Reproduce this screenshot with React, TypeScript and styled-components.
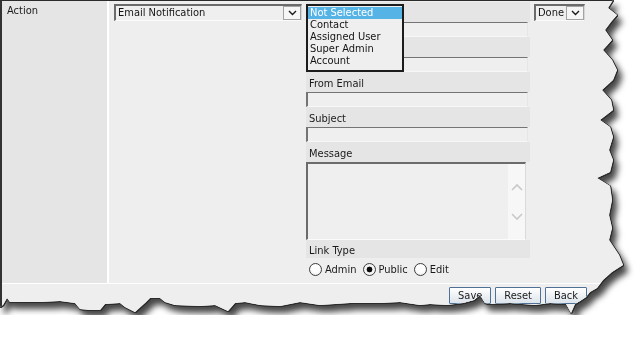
import styled, { createGlobalStyle } from "styled-components";

// ============================================
// Global
// ============================================
const GlobalStyle = createGlobalStyle`
  html, body {
    margin: 0;
    padding: 0;
    background: #ffffff;
  }
  body {
    font-family: "DejaVu Sans Condensed", "DejaVu Sans", sans-serif;
    font-stretch: condensed;
    font-size: 11px;
    color: #1a1a1a;
  }
`;

// torn paper edge around the right and bottom side
const TORN_EDGE = [
  [0, 0], [613, 0], [608, 8], [617, 15], [611, 22], [605, 30], [612, 40],
  [603, 50], [612, 60], [617, 70], [613, 80], [602, 90], [611, 100],
  [613, 110], [600, 120], [610, 127], [613, 137], [609, 150], [613, 160],
  [610, 172], [597, 178], [610, 186], [612, 200], [609, 215], [612, 228],
  [609, 240], [619, 255], [623, 265], [612, 272], [603, 280], [597, 288],
  [590, 292], [586, 297], [580, 301], [575, 304], [571, 313], [566, 304],
  [550, 303], [535, 305], [510, 303], [490, 304], [485, 303], [480, 295],
  [474, 300], [463, 303], [447, 305], [430, 304], [420, 305], [400, 302],
  [380, 303], [350, 303], [320, 305], [300, 302], [280, 306], [260, 305],
  [245, 302], [235, 303], [228, 311], [215, 305], [200, 306], [175, 305],
  [165, 302], [160, 298], [150, 298], [145, 303], [135, 312], [125, 307],
  [120, 303], [105, 304], [100, 310], [90, 310], [80, 309], [75, 303],
  [60, 301], [40, 302], [10, 302], [7, 298], [3, 305], [0, 307],
]
  .map(([x, y]) => `${x}px ${y}px`)
  .join(", ");

// ============================================
// Styled Components
// ============================================
const Shadow = styled.div`
  width: 625px;
  filter: drop-shadow(4px 6px 3px rgba(0, 0, 0, 0.72));
`;

const Outline = styled.div`
  filter: drop-shadow(1px 0 0 #2c2c2c) drop-shadow(0 1px 0 #2c2c2c);
`;

const Sheet = styled.div`
  width: 625px;
  height: 315px;
  clip-path: polygon(${TORN_EDGE});
  background: #eeeeee;
`;

const Panel = styled.div`
  height: 100%;
  box-sizing: border-box;
  display: flex;
  flex-direction: column;
  border-top: 1px solid #2b2b2b;
  border-left: 2px solid #333333;
`;

const Row = styled.div`
  display: flex;
  height: 283px;
  box-sizing: border-box;
  border-bottom: 1px solid #ffffff;
`;

const LabelCell = styled.div`
  width: 105px;
  box-sizing: border-box;
  padding: 3px 5px;
  line-height: 13px;
  background: #e5e5e5;
`;

const ContentCell = styled.div`
  flex: 1;
  display: flex;
  align-items: flex-start;
  gap: 4px;
  padding: 1px 5px 0;
  border-left: 2px solid #ffffff;
  background: #eeeeee;
`;

const SelectBox = styled.div<{ $width: number }>`
  width: ${(p) => p.$width}px;
  height: 17px;
  margin-top: 2px;
  box-sizing: border-box;
  display: flex;
  align-items: center;
  padding-left: 2px;
  border-top: 2px solid #6b6b6b;
  border-left: 2px solid #6b6b6b;
  border-right: 1px solid #d6d6d6;
  border-bottom: 1px solid #fbfbfb;
  background: #efefef;
  color: #141414;
  line-height: 14px;
  white-space: nowrap;
`;

const ArrowBox = styled.span`
  margin-left: auto;
  width: 18px;
  height: 14px;
  box-sizing: border-box;
  display: flex;
  align-items: center;
  justify-content: center;
  border: 1px solid #a3a3a3;
  background: #f6f6f6;
`;

const FormColumn = styled.div`
  position: relative;
  width: 224px;
  display: flex;
  flex-direction: column;
`;

const ListBox = styled.ul`
  position: absolute;
  top: 2px;
  left: 0;
  z-index: 2;
  width: 98px;
  height: 68px;
  box-sizing: border-box;
  margin: 0;
  padding: 1px 0 0;
  list-style: none;
  border: 2px solid #1c1c1c;
  background: #efefef;
`;

const ListOption = styled.li<{ $selected?: boolean }>`
  height: 12px;
  line-height: 12px;
  padding-left: 2px;
  white-space: nowrap;
  background: ${(p) => (p.$selected ? "#56b3e6" : "transparent")};
  color: ${(p) => (p.$selected ? "#ffffff" : "#141414")};
`;

const FieldLabel = styled.div<{ $height?: number; $pad?: number }>`
  height: ${(p) => p.$height ?? 20}px;
  box-sizing: border-box;
  padding: ${(p) => p.$pad ?? 5}px 3px 0;
  line-height: 13px;
  background: #e5e5e5;
  color: #1a1a1a;
`;

const TextInput = styled.input`
  display: block;
  width: 222px;
  height: 15px;
  box-sizing: border-box;
  margin: 0;
  padding: 0 2px;
  border-top: 1px solid #747474;
  border-left: 2px solid #747474;
  border-right: 1px solid #e6e6e6;
  border-bottom: 1px solid #f7f7f7;
  background: #efefef;
  font: inherit;
  outline: none;
`;

const TextAreaBox = styled.div`
  display: flex;
  width: 220px;
  height: 78px;
  box-sizing: border-box;
  border-top: 2px solid #6b6b6b;
  border-left: 2px solid #6b6b6b;
  border-right: 1px solid #dadada;
  border-bottom: 1px solid #fbfbfb;
  background: #efefef;
`;

const TextArea = styled.textarea`
  flex: 1;
  margin: 0;
  padding: 1px 2px;
  border: none;
  resize: none;
  overflow: hidden;
  background: transparent;
  font: inherit;
  outline: none;
`;

const ScrollTrack = styled.div`
  width: 17px;
  display: flex;
  flex-direction: column;
  align-items: center;
  gap: 22px;
  padding-top: 19px;
  background: #f7f7f7;
`;

const RadioRow = styled.div`
  display: flex;
  align-items: center;
  height: 23px;
  padding-left: 3px;
`;

const RadioOption = styled.label`
  display: flex;
  align-items: center;
  gap: 3px;
  margin-right: 6px;
  color: #1a1a1a;
`;

const RadioInput = styled.input`
  appearance: none;
  margin: 0;
  width: 13px;
  height: 13px;
  box-sizing: border-box;
  border-radius: 50%;
  border: 1px solid #3c3c3c;
  background: radial-gradient(circle at 50% 40%, #ffffff 40%, #e4e4e4 100%);

  &:checked {
    background: radial-gradient(circle, #0a0a0a 0 2.6px, #f3f3f3 3.2px);
  }
`;

const Footer = styled.div`
  flex: 1;
  display: flex;
  justify-content: flex-end;
  align-items: flex-start;
  gap: 4px;
  padding: 3px 38px 0 0;
  background: #eeeeee;
`;

const ActionButton = styled.button`
  height: 17px;
  min-width: 42px;
  box-sizing: border-box;
  margin: 0;
  padding: 0 8px;
  border: 1px solid #4f7196;
  border-radius: 1px;
  background: linear-gradient(#ffffff, #dde4ec);
  font: inherit;
  line-height: 14px;
  color: #1b1b1b;
`;

// ============================================
// Icons
// ============================================
function ChevronDown({ color = "#1a1a1a" }: { color?: string }) {
  return (
    <svg width="9" height="6" viewBox="0 0 9 6">
      <polyline
        points="1,1 4.5,4.5 8,1"
        fill="none"
        stroke={color}
        strokeWidth="1.4"
      />
    </svg>
  );
}

function ScrollChevron({ up }: { up?: boolean }) {
  return (
    <svg width="12" height="8" viewBox="0 0 12 8">
      <polyline
        points={up ? "1,7 6,2 11,7" : "1,1 6,6 11,1"}
        fill="none"
        stroke="#c9c9c9"
        strokeWidth="1.6"
      />
    </svg>
  );
}

// ============================================
// Main Component
// ============================================
const recipients = ["Not Selected", "Contact", "Assigned User", "Super Admin", "Account"];

export default function App() {
  return (
    <>
      <GlobalStyle />
      <Shadow>
        <Outline>
          <Sheet>
            <Panel>
              <Row>
                <LabelCell>Action</LabelCell>
                <ContentCell>
                  <SelectBox $width={188}>
                    Email Notification
                    <ArrowBox>
                      <ChevronDown />
                    </ArrowBox>
                  </SelectBox>

                  <FormColumn>
                    {/* open recipient list covers the first two fields */}
                    <ListBox>
                      {recipients.map((r, i) => (
                        <ListOption key={r} $selected={i === 0}>
                          {r}
                        </ListOption>
                      ))}
                    </ListBox>
                    <FieldLabel />
                    <TextInput />
                    <FieldLabel />
                    <TextInput />
                    <FieldLabel>From Email</FieldLabel>
                    <TextInput />
                    <FieldLabel>Subject</FieldLabel>
                    <TextInput />
                    <FieldLabel>Message</FieldLabel>
                    <TextAreaBox>
                      <TextArea />
                      <ScrollTrack>
                        <ScrollChevron up />
                        <ScrollChevron />
                      </ScrollTrack>
                    </TextAreaBox>
                    <FieldLabel $height={18} $pad={4}>
                      Link Type
                    </FieldLabel>
                    <RadioRow>
                      <RadioOption>
                        <RadioInput type="radio" name="linkType" />
                        Admin
                      </RadioOption>
                      <RadioOption>
                        <RadioInput type="radio" name="linkType" defaultChecked />
                        Public
                      </RadioOption>
                      <RadioOption>
                        <RadioInput type="radio" name="linkType" />
                        Edit
                      </RadioOption>
                    </RadioRow>
                  </FormColumn>

                  <SelectBox $width={51}>
                    Done
                    <ArrowBox>
                      <ChevronDown />
                    </ArrowBox>
                  </SelectBox>
                </ContentCell>
              </Row>

              <Footer>
                <ActionButton>Save</ActionButton>
                <ActionButton>Reset</ActionButton>
                <ActionButton>Back</ActionButton>
              </Footer>
            </Panel>
          </Sheet>
        </Outline>
      </Shadow>
    </>
  );
}
